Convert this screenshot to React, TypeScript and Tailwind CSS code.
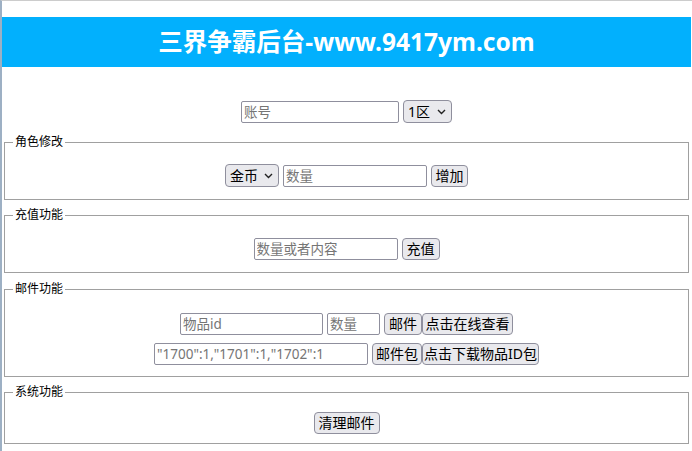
import type { FC, ReactNode } from "react";

const Chevron: FC = () => (
  <svg width="9" height="6" viewBox="0 0 9 6" fill="none" className="pointer-events-none absolute right-[6px] top-1/2 -translate-y-1/2">
    <path d="M1 1l3.5 3.5L8 1" stroke="#222" strokeWidth="1.4" />
  </svg>
);

const Select: FC<{ options: string[]; width: string }> = ({ options, width }) => (
  <span className={`relative flex ${width}`}>
    <select className="block h-[23px] w-full appearance-none rounded-[4px] border border-[#8f8f9d] bg-[#e9e9ed] pl-[4px] text-[14px] text-black outline-none">
      {options.map((o) => (
        <option key={o}>{o}</option>
      ))}
    </select>
    <Chevron />
  </span>
);

const Input: FC<{ placeholder: string; width: string }> = ({ placeholder, width }) => (
  <input
    placeholder={placeholder}
    className={`block h-[22px] ${width} rounded-[2px] border border-[#8f8f9d] bg-white px-[2px] text-[13.5px] text-black placeholder:text-[#757575] outline-none`}
  />
);

const Button: FC<{ children: ReactNode; width: string }> = ({ children, width }) => (
  <button className={`block h-[22px] ${width} rounded-[4px] border border-[#8f8f9d] bg-[#e9e9ed] px-0 text-center text-[14px] leading-[20px] text-black`}>
    {children}
  </button>
);

const Panel: FC<{ title: string; className: string; children: ReactNode }> = ({ title, className, children }) => (
  <fieldset className={`mx-[2px] min-w-0 border border-[#a0a0a0] px-[8px] ${className}`}>
    <legend className="px-[2px] text-[12px] leading-[16px] text-black">{title}</legend>
    {children}
  </fieldset>
);

export default function App() {
  return (
    <div className="min-h-[451px] border-t border-l-2 border-t-[#cccccc] border-l-[#9db0c4] bg-white pt-[16px] pr-[1px] leading-none font-['Noto_Sans','Noto_Sans_CJK_SC',sans-serif]">
      <header className="flex h-[50px] items-center justify-center bg-[#02b0fd]">
        <h1 className="text-[24.5px] font-bold leading-none text-white">三界争霸后台-www.9417ym.com</h1>
      </header>

      <div className="mt-[33px] flex h-[23px] items-center justify-center gap-[4px]">
        <Input placeholder="账号" width="w-[158px]" />
        <Select options={["1区", "2区", "3区"]} width="w-[49px]" />
      </div>

      <Panel title="角色修改" className="mt-[11px] pt-[14px] pb-[12px]">
        <div className="flex h-[23px] items-center justify-center gap-[4px]">
          <Select options={["金币", "钻石"]} width="w-[54px]" />
          <Input placeholder="数量" width="w-[144px]" />
          <Button width="w-[37px]">增加</Button>
        </div>
      </Panel>

      <Panel title="充值功能" className="mt-[7px] pt-[15px] pb-[12px]">
        <div className="flex h-[22px] items-center justify-center gap-[4px]">
          <Input placeholder="数量或者内容" width="w-[144px]" />
          <Button width="w-[38px]">充值</Button>
        </div>
      </Panel>

      <Panel title="邮件功能" className="mt-[8px] pt-[16px] pb-[11px]">
        <div className="flex flex-col items-center gap-[8px]">
          <div className="flex h-[22px] items-center">
            <Input placeholder="物品id" width="w-[143px]" />
            <span className="ml-[4px] flex">
              <Input placeholder="数量" width="w-[53px]" />
            </span>
            <span className="ml-[4px] flex">
              <Button width="w-[38px]">邮件</Button>
              <Button width="w-[91px]">点击在线查看</Button>
            </span>
          </div>
          <div className="flex h-[22px] items-center">
            <Input placeholder={'"1700":1,"1701":1,"1702":1'} width="w-[214px]" />
            <span className="ml-[4px] flex">
              <Button width="w-[50px]">邮件包</Button>
              <Button width="w-[117px]">点击下载物品ID包</Button>
            </span>
          </div>
        </div>
      </Panel>

      <Panel title="系统功能" className="mt-[7px] pt-[12px] pb-[9px]">
        <div className="flex h-[22px] justify-center">
          <Button width="w-[66px]">清理邮件</Button>
        </div>
      </Panel>
    </div>
  );
}
